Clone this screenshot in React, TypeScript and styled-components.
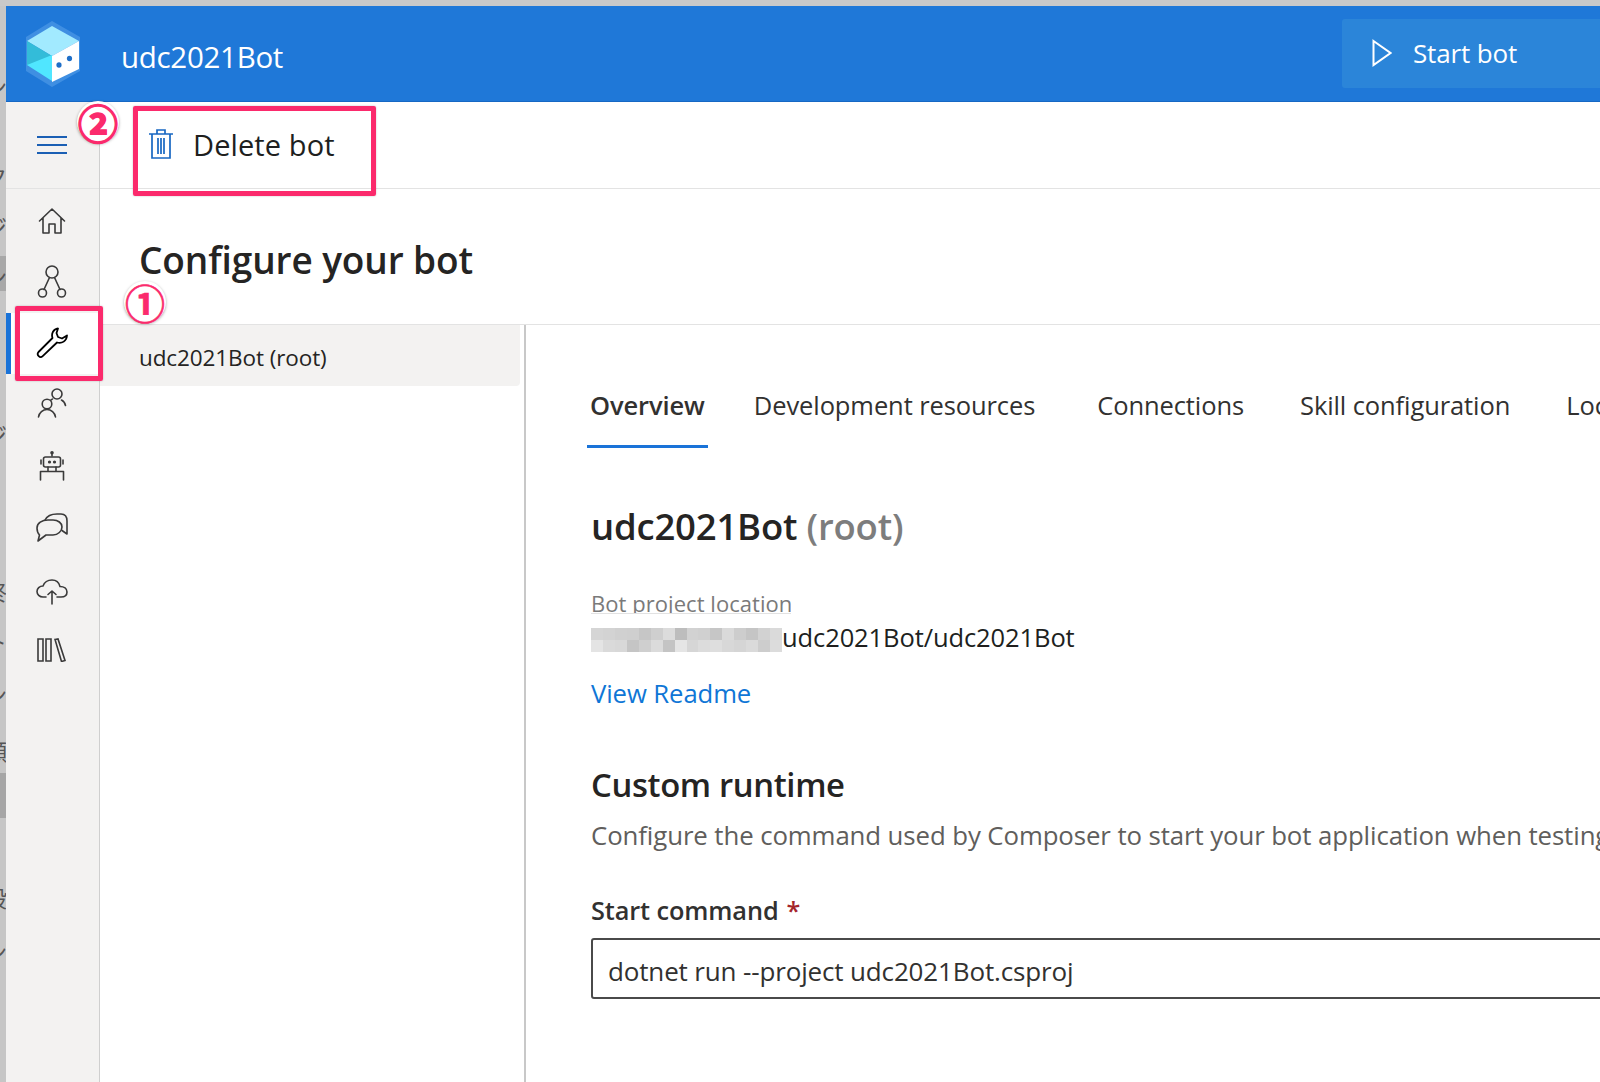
import React from "react";
import styled, { createGlobalStyle } from "styled-components";

const Global = createGlobalStyle`
  html, body { margin: 0; padding: 0; width: 1600px; height: 1082px; overflow: hidden; background: #fff; }
  #root { width: 1600px; height: 1082px; }
  * { box-sizing: border-box; }
`;

const Page = styled.div`
  position: relative;
  width: 1600px;
  height: 1082px;
  overflow: hidden;
  display: flex;
  flex-direction: column;
  font-family: "Open Sans", "Noto Sans", sans-serif;
  color: #201f1e;
  white-space: nowrap;
`;
const TopEdge = styled.div`
  height: 6px;
  flex: none;
  background: #c9c9c9;
`;
const Frame = styled.div`
  flex: 1;
  display: flex;
  min-height: 0;
`;
const BackdropStrip = styled.div`
  width: 6px;
  flex: none;
  background: linear-gradient(
    to bottom,
    #c6c6c6 0,
    #c6c6c6 250px,
    #a8a8a8 250px,
    #a8a8a8 285px,
    #c6c6c6 285px,
    #c6c6c6 767px,
    #a6a6a6 767px,
    #a6a6a6 812px,
    #c6c6c6 812px
  );
  overflow: hidden;
  display: flex;
  flex-direction: column;
  font-family: "Noto Sans CJK JP", sans-serif;
  font-size: 22px;
  line-height: 24px;
  color: #555;
`;
const BackdropGlyph = styled.span<{ $gap: number }>`
  display: block;
  flex: none;
  margin: ${(p) => p.$gap}px 0 0 -15px;
`;
const Window = styled.div`
  flex: 1;
  min-width: 0;
  display: flex;
  flex-direction: column;
`;
const Header = styled.header`
  height: 96px;
  flex: none;
  background: #1f78d8;
  border-bottom: 1px solid #1668c4;
  display: flex;
  align-items: center;
  color: #fff;
`;
const LogoSlot = styled.div`
  width: 115px;
  padding-left: 19px;
  display: flex;
  flex: none;
`;
const AppName = styled.div`
  font-size: 29.5px;
  font-weight: 400;
  flex: 1;
  margin-top: 5px;
  letter-spacing: -0.3px;
`;
const StartButton = styled.div`
  width: 258px;
  height: 69px;
  margin-top: -1px;
  background: #2b85d9;
  border-radius: 3px 0 0 3px;
  display: flex;
  align-items: center;
  padding-left: 30px;
  gap: 21px;
  font-size: 26px;
  letter-spacing: -0.15px;
`;
const Body = styled.div`
  flex: 1;
  display: flex;
  min-height: 0;
`;
const Sidebar = styled.nav`
  width: 94px;
  flex: none;
  background: #f3f2f1;
  border-right: 1px solid #cfcfcf;
  display: flex;
  flex-direction: column;
`;
const MenuCell = styled.div`
  height: 87px;
  flex: none;
  border-bottom: 1px solid #e3e3e3;
  display: flex;
  align-items: center;
  justify-content: center;
  margin-bottom: 1px;
  padding-right: 2px;
`;
const NavItem = styled.div<{ $active?: boolean }>`
  position: relative;
  height: 61.4px;
  flex: none;
  display: flex;
  align-items: center;
  justify-content: center;
  padding-right: 2px;
  background: ${(p) => (p.$active ? "#fff" : "transparent")};
  color: ${(p) => (p.$active ? "#000" : "#3a3a3a")};
  &::before {
    content: "";
    display: ${(p) => (p.$active ? "block" : "none")};
    position: absolute;
    left: 0;
    top: 0;
    bottom: 0;
    width: 5px;
    background: #1a73d8;
  }
`;
const Content = styled.main`
  flex: 1;
  min-width: 0;
  display: flex;
  flex-direction: column;
`;
const Toolbar = styled.div`
  height: 87px;
  flex: none;
  border-bottom: 1px solid #e3e3e3;
  display: flex;
  align-items: flex-start;
  padding: 26px 0 0 49px;
  gap: 20px;
  font-size: 29px;
  color: #201f1e;
`;
const ToolbarLabel = styled.span`
  line-height: 36px;
  margin-top: -1px;
  letter-spacing: 0.1px;
`;
const TitleBar = styled.div`
  height: 136px;
  flex: none;
  border-bottom: 1px solid #e3e3e3;
  padding: 46px 0 0 39px;
`;
const PageTitle = styled.h1`
  margin: 0;
  font-size: 37px;
  line-height: 50px;
  font-weight: 600;
  letter-spacing: -0.1px;
  color: #252423;
`;
const Split = styled.div`
  flex: 1;
  display: flex;
  min-height: 0;
`;
const ProjectList = styled.div`
  width: 426px;
  flex: none;
  padding-right: 4px;
  border-right: 2px solid #c8c8c8;
`;
const ProjectRow = styled.div`
  height: 61px;
  background: #f3f2f1;
  border-radius: 0 0 4px 0;
  padding: 3px 0 0 39px;
  display: flex;
  align-items: center;
  font-size: 22.5px;
  font-weight: 500;
  color: #252423;
  letter-spacing: -0.1px;
`;
const Detail = styled.section`
  flex: 1;
  min-width: 0;
  padding: 56px 0 0 65px;
  overflow: hidden;
`;
const Tabs = styled.div`
  display: flex;
  height: 67px;
  margin-left: -4px;
`;
const Tab = styled.div<{ $active?: boolean; $gap: number }>`
  flex: none;
  padding: 4px 3px 0;
  margin-right: ${(p) => p.$gap}px;
  font-size: 25.5px;
  line-height: 40px;
  letter-spacing: -0.1px;
  font-weight: ${(p) => (p.$active ? 600 : 400)};
  color: #323130;
  border-bottom: ${(p) => (p.$active ? "3px solid #1a73d8" : "none")};
`;
const ProjectHeading = styled.h2`
  margin: 53px 0 0;
  font-size: 36.5px;
  line-height: 50px;
  font-weight: 600;
  letter-spacing: -0.2px;
  color: #252423;
`;
const Muted = styled.span`
  color: #7d7d7d;
`;
const LocationBlock = styled.div`
  margin-top: 37px;
  height: 68px;
`;
const LocationLabel = styled.div`
  width: 200px;
  height: 26px;
  font-size: 22px;
  line-height: 30px;
  color: #7a7a7a;
  overflow: hidden;
  letter-spacing: 0.05px;
  border-bottom: 1px solid #e2e2e2;
`;
const LocationValue = styled.div`
  display: flex;
  align-items: flex-start;
  margin-top: 10px;
  font-size: 25.5px;
  line-height: 26px;
  letter-spacing: -0.1px;
  color: #201f1e;
`;
const Mosaic = styled.div`
  width: 191px;
  height: 24px;
  margin-top: 4px;
  flex: none;
  display: grid;
  grid-template-columns: repeat(16, 1fr);
  grid-template-rows: 12px 12px;
`;
const MosaicCell = styled.div``;
const ReadmeLink = styled.a`
  display: block;
  margin-top: 20px;
  font-size: 25.7px;
  line-height: 36px;
  letter-spacing: -0.1px;
  color: #0f76d6;
`;
const SectionHeading = styled.h3`
  margin: 49px 0 0;
  font-size: 32.8px;
  line-height: 48px;
  font-weight: 600;
  letter-spacing: -0.35px;
  color: #252423;
`;
const SectionText = styled.p`
  margin: 8px 0 0;
  font-size: 25.8px;
  line-height: 36px;
  letter-spacing: -0.1px;
  color: #605e5c;
`;
const FieldLabel = styled.label`
  display: block;
  margin-top: 39px;
  font-size: 25.3px;
  line-height: 36px;
  font-weight: 600;
  letter-spacing: -0.1px;
  color: #323130;
`;
const Required = styled.span`
  color: #a4262c;
  margin-left: 8px;
`;
const CommandBox = styled.div`
  margin-top: 10px;
  width: 1200px;
  height: 61px;
  border: 2px solid #4a4a4a;
  border-radius: 3px;
  display: flex;
  align-items: center;
  padding: 4px 0 0 15px;
  font-size: 26px;
  letter-spacing: -0.15px;
  color: #323130;
`;
const Callout = styled.div<{ $x: number; $y: number; $w: number; $h: number }>`
  position: absolute;
  left: ${(p) => p.$x}px;
  top: ${(p) => p.$y}px;
  width: ${(p) => p.$w}px;
  height: ${(p) => p.$h}px;
  border: 5px solid #fb2a6c;
  border-radius: 2px;
  box-shadow: 0 0 2px rgba(0, 0, 0, 0.25);
  pointer-events: none;
`;
const Badge = styled.div<{ $x: number; $y: number; $stroke: number }>`
  position: absolute;
  left: ${(p) => p.$x - 21}px;
  top: ${(p) => p.$y - 21}px;
  width: 42px;
  height: 42px;
  border-radius: 50%;
  background: #fff;
  box-shadow: 0 1px 3px rgba(0, 0, 0, 0.35);
  color: #fb2a6c;
  -webkit-text-stroke: ${(p) => p.$stroke}px #fb2a6c;
  display: flex;
  align-items: center;
  justify-content: center;
  font-family: "Noto Sans CJK JP", sans-serif;
  font-weight: 700;
  font-size: 40px;
  line-height: 42px;
`;

const stroke = { fill: "none", stroke: "currentColor", strokeWidth: 1.6, strokeLinecap: "round", strokeLinejoin: "round" } as const;

const Logo = () => (
  <svg width="56" height="68" viewBox="25 20 56 68">
    <path d="M52 21 80 37V71L52 87 26 71V37Z" fill="#3f8fe2" />
    <path d="M52 26 79 41 52 56 27 41Z" fill="#a2eaff" />
    <path d="M52 56 79 41V69L52 82Z" fill="#fff" />
    <path d="M27 41 52 56V66L27 65Z" fill="#33bcd9" />
    <path d="M27 65 52 55V81Z" fill="#50e6ff" />
    <ellipse cx="59" cy="65" rx="2.6" ry="2.8" fill="#1f6fc8" />
    <ellipse cx="69.500" cy="58.500" rx="2.6" ry="2.8" fill="#1f6fc8" />
  </svg>
);
const PlayIcon = () => (
  <svg width="20" height="28" viewBox="0 0 20 28">
    <path d="M1.5 2 18.500 14 1.500 26Z" fill="none" stroke="#fff" strokeWidth="2" strokeLinejoin="miter" />
  </svg>
);
const MenuIcon = () => (
  <svg width="32" height="20" viewBox="0 0 32 20">
    <path d="M1 2H31M1 10H31M1 18H31" stroke="#1a5fb4" strokeWidth="1.800" />
  </svg>
);
const TrashIcon = () => (
  <svg width="24" height="32" viewBox="0 0 24 32">
    <g fill="none" stroke="#1767c2" strokeWidth="1.700">
      <path d="M0 6H24M8 6V2H16V6M3 6V30H21V6" />
      <path d="M9 10V26M12 10V26M15 10V26" />
    </g>
  </svg>
);
const HomeIcon = () => (
  <svg width="28" height="30" viewBox="0 0 28 30" {...stroke}>
    <path d="M1.500 15 14 3 26.500 15M5 12V27H11V18H17V27H23V12" />
  </svg>
);
const FlowIcon = () => (
  <svg width="30" height="34" viewBox="0 0 30 34" {...stroke}>
    <circle cx="15" cy="7" r="6" />
    <circle cx="5.500" cy="28" r="4" />
    <circle cx="24.500" cy="28" r="4" />
    <path d="M12.500 12.500 7 24.500M17.500 12.500 23 24.500" />
  </svg>
);
const WrenchIcon = () => (
  <svg width="32" height="32" viewBox="0 0 32 32" fill="none" stroke="currentColor" strokeWidth="1.800" strokeLinejoin="round">
    <path d="M22 1.500 C17.500 2 15 6.500 16.500 11 L2.500 25 C1.300 26.500 1.500 28 2.700 29.200 C4 30.500 5.500 30.300 6.700 29.200 L21 15.500 C26 17 30.500 14 31 8.500 L26 11.500 L22 10 L20.500 6 Z" />
  </svg>
);
const UsersIcon = () => (
  <svg width="30" height="36" viewBox="0 0 30 36" {...stroke}>
    <circle cx="20" cy="7" r="5" />
    <circle cx="10" cy="17" r="4.800" />
    <path d="M1.500 30C2 25.500 6 22.500 10 22.500S18 25.500 18.500 30M14 13C14.500 12.500 15 12.500 15.500 12M24.500 13C26.500 14 28 16 28.500 18.500" />
  </svg>
);
const BotIcon = () => (
  <svg width="26" height="30" viewBox="0 0 26 30" {...stroke}>
    <path d="M13 2V5" />
    <circle cx="13" cy="1.800" r="1" fill="currentColor" />
    <rect x="4.500" y="6" width="17" height="10" rx="2" />
    <path d="M2 9V13M24 9V13M9 16V20M17 16V20M1.500 29V20.500H24.500V29" />
    <circle cx="10.500" cy="11" r="0.800" fill="currentColor" />
    <circle cx="15.500" cy="11" r="0.800" fill="currentColor" />
  </svg>
);
const ChatIcon = () => (
  <svg width="32" height="30" viewBox="0 0 32 30" {...stroke}>
    <path d="M9 7C11 3 15 1 21 1H25C29 1 31 4 31 8V21L26 17.500" />
    <path d="M12 7H17C22 7 26 10 26 14S22 22 17 22H10L2 28 3.500 22C1.500 20 1 18 1 15 1 10 6 7 12 7Z" />
  </svg>
);
const CloudIcon = () => (
  <svg width="32" height="32" viewBox="0 -6 32 32" {...stroke}>
    <path d="M10 18H7C3.500 18 1 15.500 1 12.500S3.500 7 7 7C8.500 3 12 1 16 1S23 3.500 24 7.500C28 7.500 31 9.500 31 13S28 18 25 18H21" />
    <path d="M16 25V12M12 15.500 16 12 20 15.500" />
  </svg>
);
const LibraryIcon = () => (
  <svg width="30" height="24" viewBox="0 0 30 24" fill="none" stroke="currentColor" strokeWidth="1.600">
    <path d="M1 1H6V23H1ZM9 1H14V23H9ZM18 1.500 21 1 28 22.500 24.500 23.500Z" />
  </svg>
);

const navIcons = [HomeIcon, FlowIcon, WrenchIcon, UsersIcon, BotIcon, ChatIcon, CloudIcon, LibraryIcon];

const mosaicColours = [
  "#d5d5d5","#d3d3d3","#d0d0d0","#cfcfcf","#c6c6c6","#cfcfcf","#dcdcdc","#bdbdbd","#d2d2d2","#d0d0d0","#c6c6c6","#dadada","#cdcdcd","#c5c5c5","#d2d2d2","#dadada",
  "#e4e4e4","#dadada","#d8d8d8","#c5c5c5","#cfcfcf","#dbdbdb","#c4c4c4","#e5e5e5","#d6d6d6","#dcdcdc","#dedede","#d8d8d8","#d5d5d5","#dadada","#cdcdcd","#dcdcdc",
];

const backdropGlyphs: [string, number][] = [
  ["ン", 67], ["r", 19], ["ク", 23], ["ジ", 26], ["ン", 26], ["N", 88], ["ジ", 22], ["終", 133],
  ["ト", 26], ["ン", 29], ["願", 33], ["r", 73], ["設", 26], ["ン", 29], ["r", 19],
];

export default function App() {
  return (
    <Page>
      <Global />
      <TopEdge />
      <Frame>
        <BackdropStrip>
          {backdropGlyphs.map(([g, gap], i) => (
            <BackdropGlyph key={i} $gap={gap}>{g}</BackdropGlyph>
          ))}
        </BackdropStrip>
        <Window>
          <Header>
            <LogoSlot>
              <Logo />
            </LogoSlot>
            <AppName>udc2021Bot</AppName>
            <StartButton>
              <PlayIcon />
              <span>Start bot</span>
            </StartButton>
          </Header>
          <Body>
            <Sidebar>
              <MenuCell>
                <MenuIcon />
              </MenuCell>
              {navIcons.map((Icon, i) => (
                <NavItem key={i} $active={i === 2}>
                  <Icon />
                </NavItem>
              ))}
            </Sidebar>
            <Content>
              <Toolbar>
                <TrashIcon />
                <ToolbarLabel>Delete bot</ToolbarLabel>
              </Toolbar>
              <TitleBar>
                <PageTitle>Configure your bot</PageTitle>
              </TitleBar>
              <Split>
                <ProjectList>
                  <ProjectRow>udc2021Bot (root)</ProjectRow>
                </ProjectList>
                <Detail>
                  <Tabs>
                    <Tab $active $gap={43}>Overview</Tab>
                    <Tab $gap={56}>Development resources</Tab>
                    <Tab $gap={50}>Connections</Tab>
                    <Tab $gap={50}>Skill configuration</Tab>
                    <Tab $gap={0}>Localization</Tab>
                  </Tabs>
                  <ProjectHeading>
                    udc2021Bot <Muted>(root)</Muted>
                  </ProjectHeading>
                  <LocationBlock>
                    <LocationLabel>Bot project location</LocationLabel>
                    <LocationValue>
                      <Mosaic>
                        {mosaicColours.map((c, i) => (
                          <MosaicCell key={i} style={{ background: c }} />
                        ))}
                      </Mosaic>
                      <span>udc2021Bot/udc2021Bot</span>
                    </LocationValue>
                  </LocationBlock>
                  <ReadmeLink>View Readme</ReadmeLink>
                  <SectionHeading>Custom runtime</SectionHeading>
                  <SectionText>Configure the command used by Composer to start your bot application when testing it locally.</SectionText>
                  <FieldLabel>
                    Start command<Required>*</Required>
                  </FieldLabel>
                  <CommandBox>dotnet run --project udc2021Bot.csproj</CommandBox>
                </Detail>
              </Split>
            </Content>
          </Body>
        </Window>
      </Frame>
      <Callout $x={133} $y={106} $w={243} $h={90} />
      <Callout $x={15} $y={306} $w={88} $h={75} />
      <Badge $x={98} $y={122} $stroke={1.5}>②</Badge>
      <Badge $x={145} $y={302} $stroke={0.6}>①</Badge>
    </Page>
  );
}
